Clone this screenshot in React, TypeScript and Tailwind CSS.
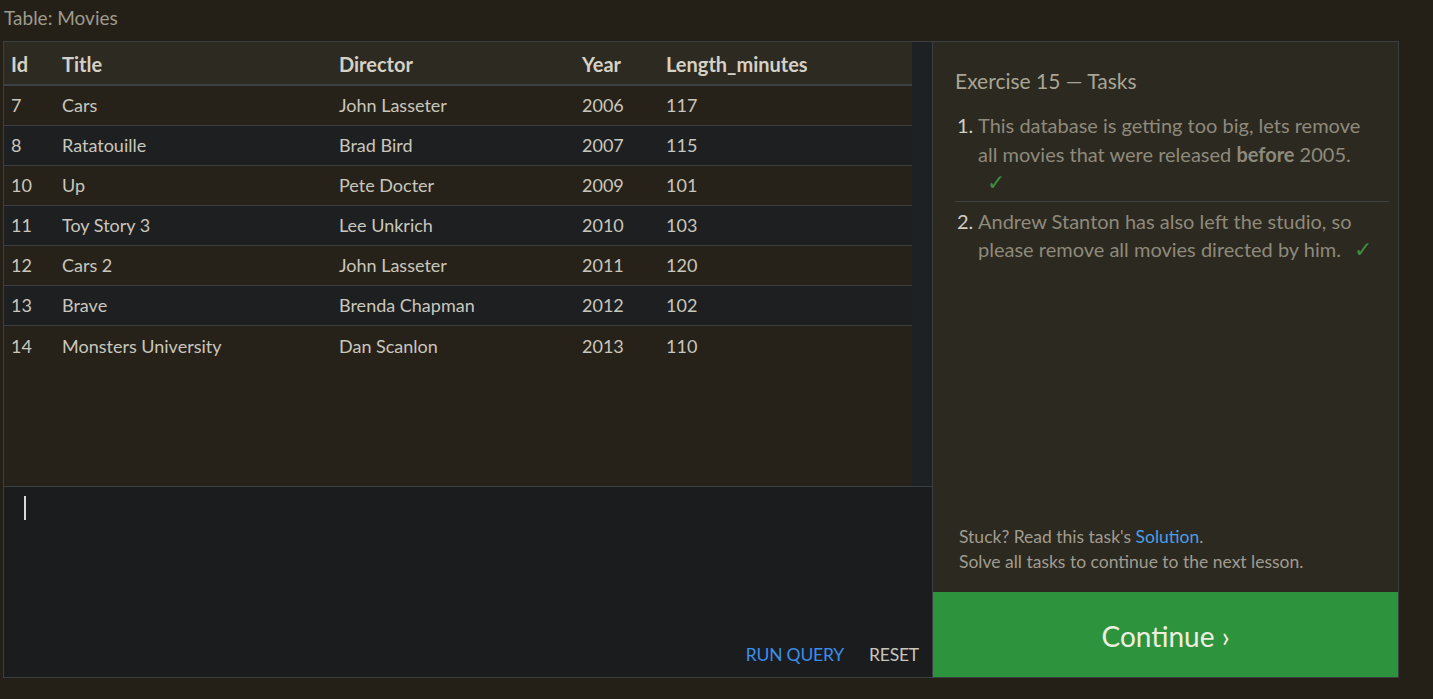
import { Fragment } from 'react';

const movies = [
  { id: 7, title: 'Cars', director: 'John Lasseter', year: 2006, length: 117 },
  { id: 8, title: 'Ratatouille', director: 'Brad Bird', year: 2007, length: 115 },
  { id: 10, title: 'Up', director: 'Pete Docter', year: 2009, length: 101 },
  { id: 11, title: 'Toy Story 3', director: 'Lee Unkrich', year: 2010, length: 103 },
  { id: 12, title: 'Cars 2', director: 'John Lasseter', year: 2011, length: 120 },
  { id: 13, title: 'Brave', director: 'Brenda Chapman', year: 2012, length: 102 },
  { id: 14, title: 'Monsters University', director: 'Dan Scanlon', year: 2013, length: 110 },
];

const font = "font-['Segoe_UI','Lato','Open_Sans',sans-serif]";

function MoviesTable() {
  return (
    <div className="flex h-[444px]">
      <div className="w-[908px] flex flex-col">
        {/* Header */}
        <div className="flex items-center pt-[2px] h-[44px] bg-[#2d2a22] border-b-2 border-[#3c4044] text-[20px] font-bold text-[#d4d1c6]">
          <div className="w-[58px] pl-[7px]">Id</div>
          <div className="w-[277px]">Title</div>
          <div className="w-[243px]">Director</div>
          <div className="w-[84px]">Year</div>
          <div>Length_minutes</div>
        </div>
        {movies.map((m, i) => (
          <Fragment key={m.id}>
            <div
              className={`flex items-center h-[40px] text-[18px] text-[#c9c7bd] ${
                i % 2 === 1 ? 'bg-[#1d1f21]' : 'bg-[#272219]'
              } ${i < movies.length - 1 ? 'border-b border-[#3a3e40]' : ''}`}
            >
              <div className="w-[58px] pl-[7px]">{m.id}</div>
              <div className="w-[277px]">{m.title}</div>
              <div className="w-[243px]">{m.director}</div>
              <div className="w-[84px]">{m.year}</div>
              <div>{m.length}</div>
            </div>
          </Fragment>
        ))}
        <div className="flex-1 bg-[#272219]" />
      </div>
      {/* Scrollbar track */}
      <div className="flex-1 bg-[#1e2124]" />
    </div>
  );
}

function Check({ className = '' }: { className?: string }) {
  return (
    <span className={`text-[#3f8f3f] font-['DejaVu_Sans',sans-serif] font-extralight text-[22px] leading-[20px] ${className}`}>
      ✓
    </span>
  );
}

export default function App() {
  return (
    <div className={`h-[699px] w-[1433px] bg-[#252017] ${font} flex flex-col overflow-hidden`}>
      <div className="h-[41px] pl-[4px] pt-[6px] text-[19px] text-[#9d9a8e] leading-[24px]">Table: Movies</div>

      <div className="flex ml-[3px] h-[637px]">
        {/* Left: table + editor */}
        <div className="w-[930px] border border-[#3a3f42] flex flex-col bg-[#1b1c1e]">
          <MoviesTable />
          <div className="flex-1 border-t border-[#3a3f42] flex flex-col">
            <div className="pl-[20px] pt-[9px] flex-1">
              <div className="w-[2px] h-[24px] bg-[#d8d8d8]" />
            </div>
            <div className="flex justify-end items-center gap-[25px] pr-[13px] pb-[10px] text-[17.5px] leading-[24px] tracking-[-0.2px]">
              <button className="text-[#3b8eea]">RUN QUERY</button>
              <button className="text-[#c8c6bc]">RESET</button>
            </div>
          </div>
        </div>

        {/* Right: tasks */}
        <div className="w-[466px] border border-l-0 border-[#3a3f42] bg-[#2c2920] flex flex-col">
          <div className="flex-1 pl-[22px] pr-[9px] pt-[25px]">
            <h2 className="text-[21px] leading-[28px] text-[#a9a596]">Exercise 15 — Tasks</h2>
            <ol className="mt-[16px] text-[20px] leading-[28.5px] text-[#8e8a7c]">
              <li className="flex pb-[4px] border-b border-[#3e4244]">
                <span className="w-[23px] shrink-0 pl-[2px] text-[#d0cec6]">1.</span>
                <span className="w-[398px]">
                  This database is getting too big, lets remove all movies that were released{' '}
                  <b className="font-bold">before</b> 2005.
                  <br />
                  <Check className="ml-[9px]" />
                </span>
              </li>
              <li className="flex pt-[5px]">
                <span className="w-[23px] shrink-0 pl-[2px] text-[#d0cec6]">2.</span>
                <span className="w-[410px]">
                  Andrew Stanton has also left the studio, so please remove all movies directed by him.{' '}
                  <Check className="ml-[8px]" />
                </span>
              </li>
            </ol>
          </div>
          <div className="pl-[26px] pb-[18px] text-[17.5px] leading-[25px] text-[#a09c90]">
            <p>
              Stuck? Read this task's <a className="text-[#4a9ee8]">Solution</a>.
            </p>
            <p>Solve all tasks to continue to the next lesson.</p>
          </div>
          <button className="h-[85px] pt-[3px] bg-[#2e933d] text-[28px] text-[#eeeee0] flex items-center justify-center">
            Continue ›
          </button>
        </div>
      </div>
    </div>
  );
}
